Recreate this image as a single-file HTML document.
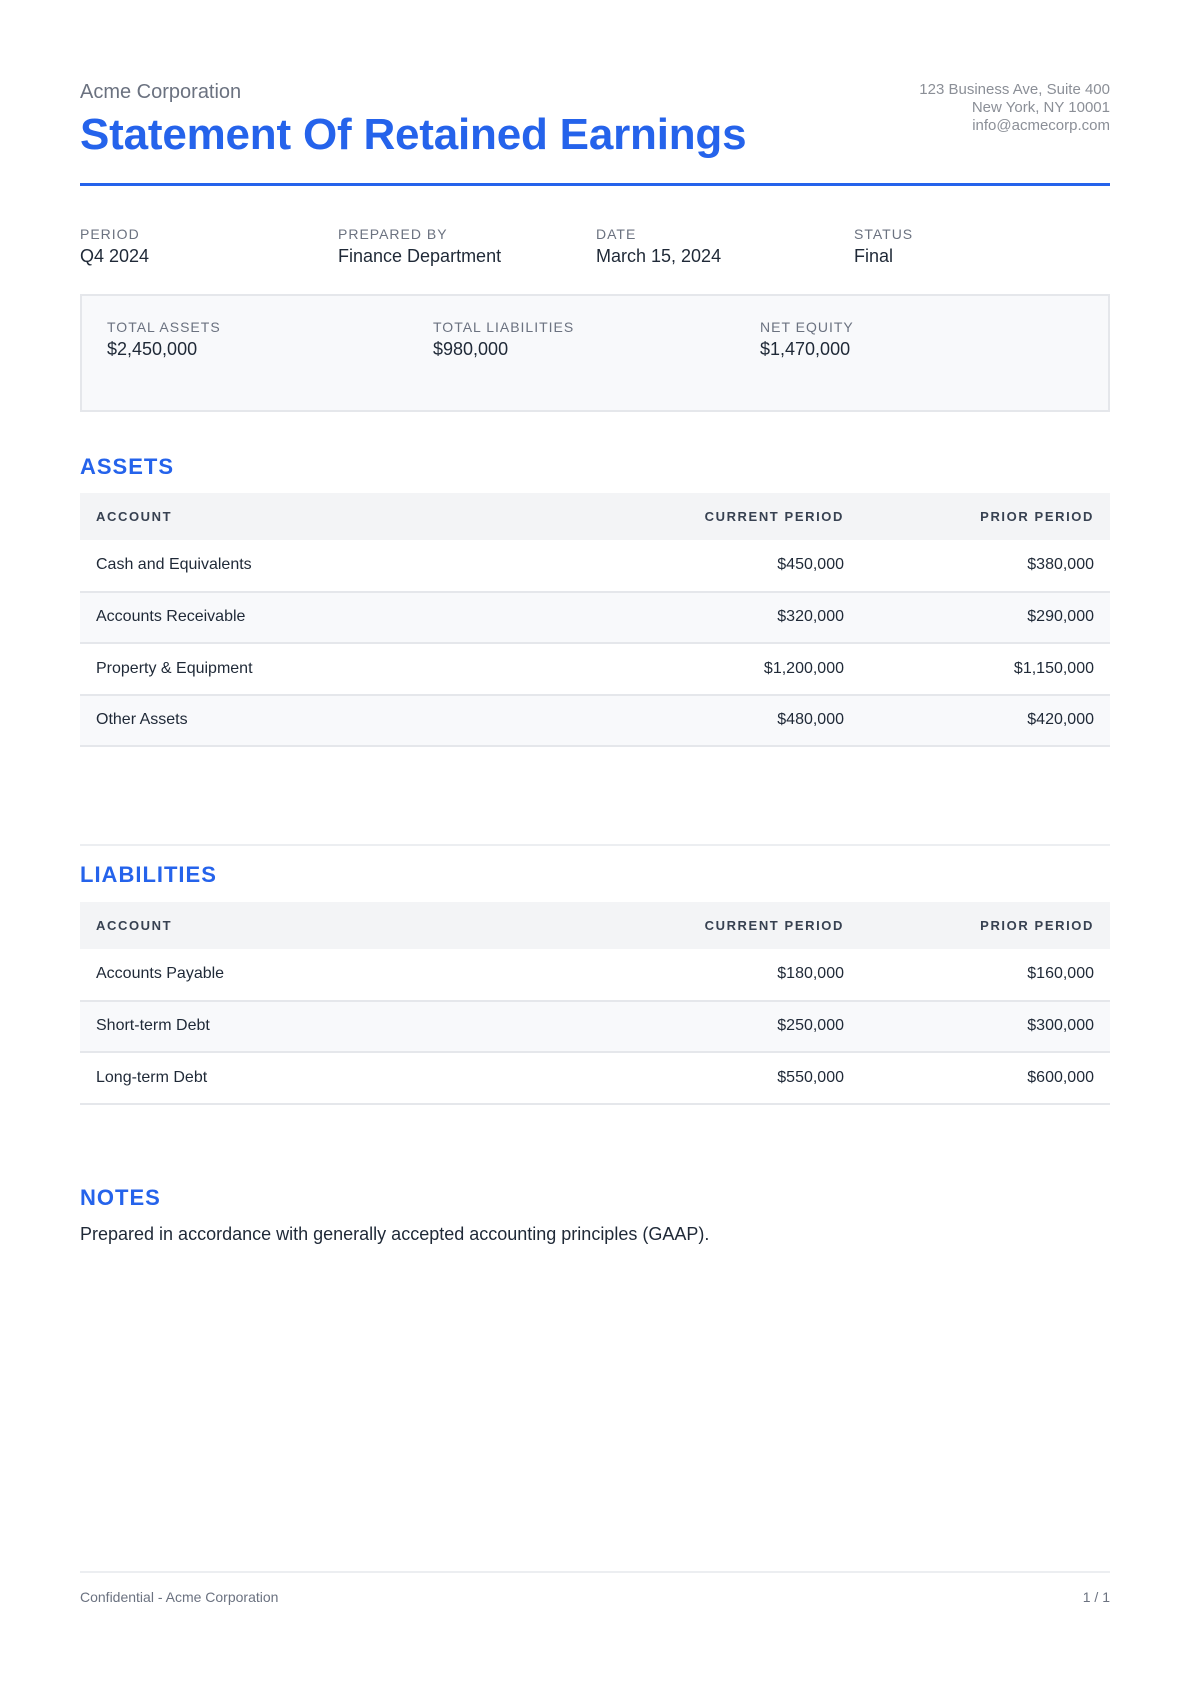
<!DOCTYPE html>
<html><head><meta charset="utf-8"><style>
*{margin:0;padding:0;box-sizing:border-box}
body{width:1190px;height:1683px;background:#fff;font-family:"Liberation Sans",Arial,sans-serif;color:#1f2937;position:relative}
.abs{position:absolute}
.company{left:80px;top:81px;font-size:20px;color:#6b7280}
.title{left:80px;top:110px;font-size:44px;font-weight:bold;color:#2563eb;letter-spacing:-0.2px}
.addr{right:80px;top:81px;text-align:right;font-size:15px;line-height:18px;color:#8b8f97}
.rule{left:80px;width:1030px;top:183px;height:3px;background:#2563eb}
.meta{top:226px;font-size:14px}
.lbl{font-size:14px;letter-spacing:1px;color:#6b7280;text-transform:uppercase}
.val{font-size:18px;color:#1f2937;margin-top:4px}
.box{left:80px;top:294px;width:1030px;height:118px;background:#f8f9fb;border:2px solid #e5e7eb}
.h2{left:80px;font-size:22px;font-weight:bold;color:#2563eb;letter-spacing:1px}
table{position:absolute;left:80px;width:1030px;border-collapse:collapse}
th{background:#f3f4f6;height:47px;font-size:13px;font-weight:bold;letter-spacing:1.6px;color:#374151;text-align:left;padding:0 16px}
td{height:51.5px;font-size:16px;padding:0 16px;border-bottom:2px solid #e5e7eb;color:#1f2937}
tr:nth-child(odd) td{background:#f8f9fb}
.r{text-align:right}
.sep{left:80px;width:1030px;height:2px;background:#eceef1}
</style></head><body>
<div class="abs company">Acme Corporation</div>
<div class="abs title">Statement Of Retained Earnings</div>
<div class="abs addr">123 Business Ave, Suite 400<br>New York, NY 10001<br>info@acmecorp.com</div>
<div class="abs rule"></div>

<div class="abs meta" style="left:80px"><div class="lbl">Period</div><div class="val">Q4 2024</div></div>
<div class="abs meta" style="left:338px"><div class="lbl">Prepared By</div><div class="val">Finance Department</div></div>
<div class="abs meta" style="left:596px"><div class="lbl">Date</div><div class="val">March 15, 2024</div></div>
<div class="abs meta" style="left:854px"><div class="lbl">Status</div><div class="val">Final</div></div>

<div class="abs box"></div>
<div class="abs meta" style="left:107px;top:319px"><div class="lbl">Total Assets</div><div class="val">$2,450,000</div></div>
<div class="abs meta" style="left:433px;top:319px"><div class="lbl">Total Liabilities</div><div class="val">$980,000</div></div>
<div class="abs meta" style="left:760px;top:319px"><div class="lbl">Net Equity</div><div class="val">$1,470,000</div></div>

<div class="abs h2" style="top:454px">ASSETS</div>
<table style="top:493px">
<tr><th>ACCOUNT</th><th class="r">CURRENT PERIOD</th><th class="r" style="width:250px">PRIOR PERIOD</th></tr>
<tr><td>Cash and Equivalents</td><td class="r">$450,000</td><td class="r">$380,000</td></tr>
<tr><td>Accounts Receivable</td><td class="r">$320,000</td><td class="r">$290,000</td></tr>
<tr><td>Property &amp; Equipment</td><td class="r">$1,200,000</td><td class="r">$1,150,000</td></tr>
<tr><td>Other Assets</td><td class="r">$480,000</td><td class="r">$420,000</td></tr>
</table>

<div class="abs sep" style="top:844px"></div>
<div class="abs h2" style="top:862px">LIABILITIES</div>
<table style="top:902px">
<tr><th>ACCOUNT</th><th class="r">CURRENT PERIOD</th><th class="r" style="width:250px">PRIOR PERIOD</th></tr>
<tr><td>Accounts Payable</td><td class="r">$180,000</td><td class="r">$160,000</td></tr>
<tr><td>Short-term Debt</td><td class="r">$250,000</td><td class="r">$300,000</td></tr>
<tr><td>Long-term Debt</td><td class="r">$550,000</td><td class="r">$600,000</td></tr>
</table>

<div class="abs h2" style="top:1185px">NOTES</div>
<div class="abs" style="left:80px;top:1224px;font-size:18px;color:#1f2937">Prepared in accordance with generally accepted accounting principles (GAAP).</div>

<div class="abs sep" style="top:1571px"></div>
<div class="abs" style="left:80px;top:1589px;font-size:14px;color:#6b7280">Confidential - Acme Corporation</div>
<div class="abs" style="right:80px;top:1589px;font-size:14px;color:#6b7280">1 / 1</div>
</body></html>
